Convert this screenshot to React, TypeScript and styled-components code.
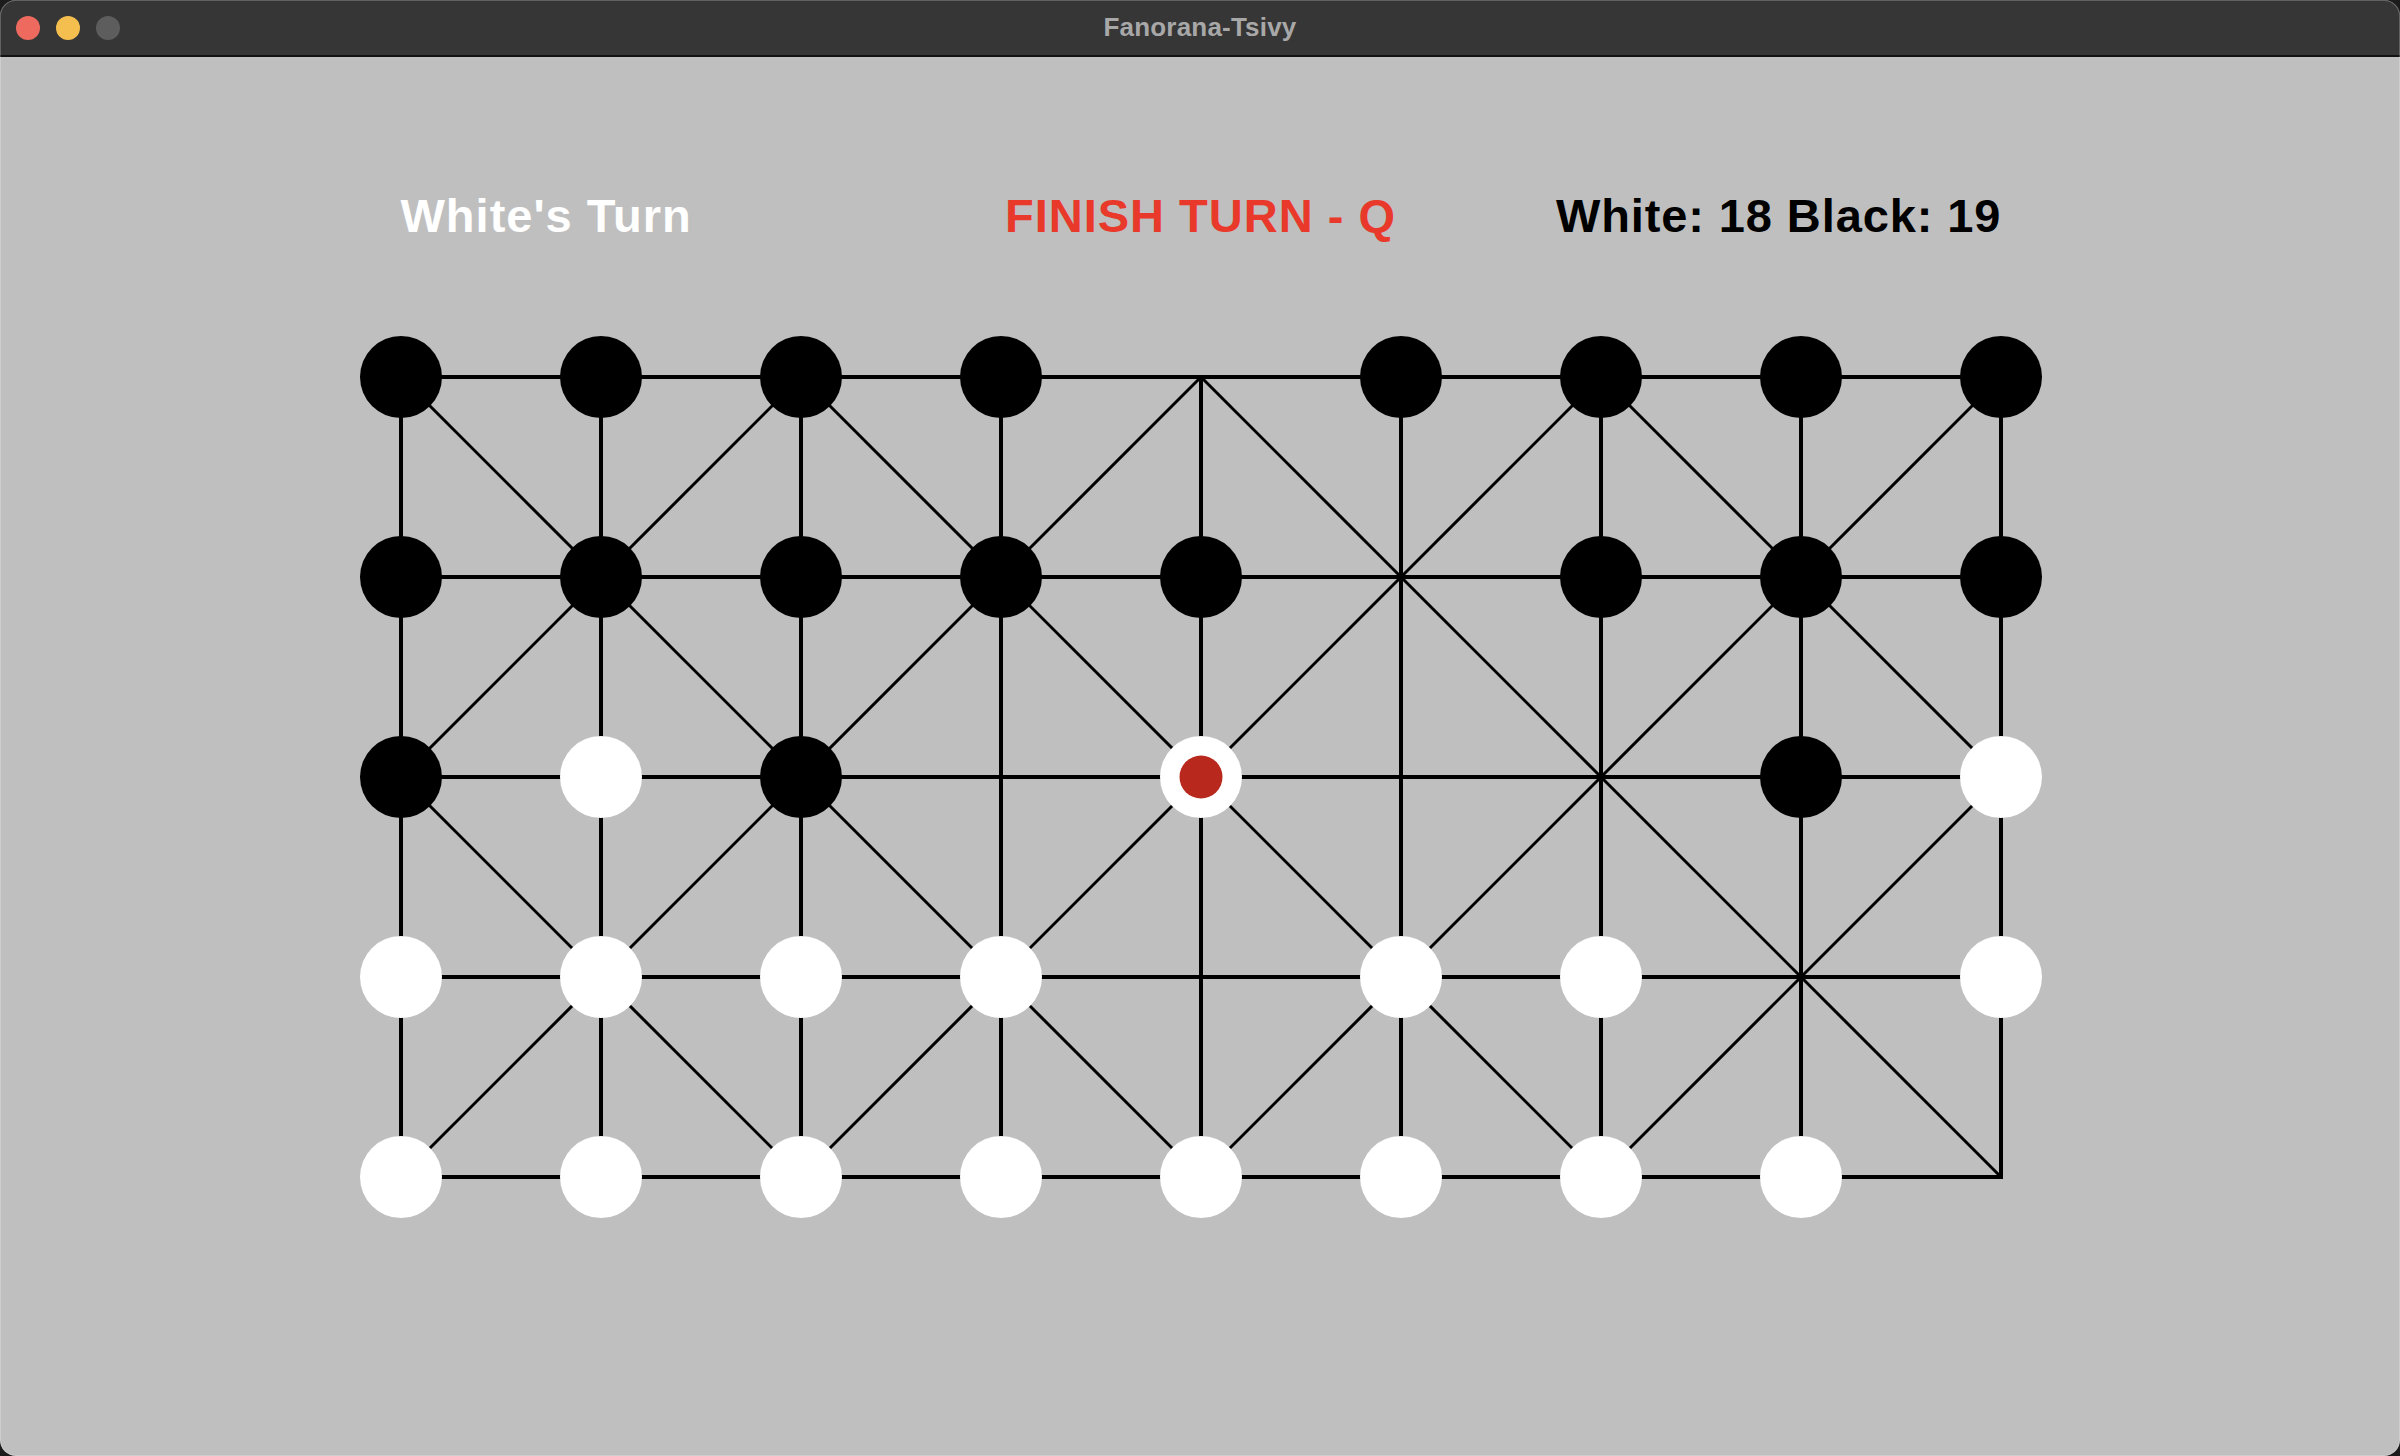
import React from "react";
import styled, { createGlobalStyle } from "styled-components";

type Cell = "B" | "W" | "S" | ".";

// S = the white piece that is selected (red dot)
const BOARD: string[] = [
  "BBBB.BBBB",
  "BBBBB.BBB",
  "BWB.S..BW",
  "WWWW.WW.W",
  "WWWWWWWW.",
];

const STEP = 200;
const PAD = 50;
const COLS = 9;
const ROWS = 5;
const PIECE_R = 41;

const GlobalStyle = createGlobalStyle`
  html, body {
    margin: 0;
    padding: 0;
    background: #1c1c1c;
  }

  body {
    font-family: "Liberation Sans", Arial, sans-serif;
  }
`;

const Window = styled.div`
  position: relative;
  width: 2400px;
  height: 1456px;
  border-radius: 16px;
  overflow: hidden;
  background: #bfbfbf;
  display: flex;
  flex-direction: column;

  &::after {
    content: "";
    position: absolute;
    inset: 0;
    border-radius: 16px;
    box-shadow: inset 0 0 0 1px rgba(255, 255, 255, 0.22);
    pointer-events: none;
  }
`;

const TitleBar = styled.div`
  height: 55px;
  flex: none;
  background: #363636;
  border-bottom: 2px solid #111;
  display: grid;
  grid-template-columns: 1fr auto 1fr;
  align-items: center;
`;

const Lights = styled.div`
  display: flex;
  gap: 16px;
  padding-left: 16px;
`;

const Light = styled.span<{ $color: string }>`
  width: 24px;
  height: 24px;
  border-radius: 50%;
  background: ${(p) => p.$color};
`;

const Title = styled.div`
  color: #a8a8a8;
  font-weight: 700;
  font-size: 26px;
  letter-spacing: 0.2px;
`;

const Content = styled.main`
  flex: 1;
  display: flex;
  flex-direction: column;
  align-items: center;
  padding-top: 135px;
`;

const Header = styled.div`
  width: 1600px;
  display: grid;
  grid-template-columns: 1fr 1fr 1fr;
  margin-left: 1px;
`;

const Label = styled.div<{ $color: string; $align: "left" | "center" | "right"; $spacing?: number }>`
  color: ${(p) => p.$color};
  font-size: 47px;
  line-height: 47px;
  font-weight: 700;
  white-space: nowrap;
  text-align: ${(p) => p.$align};
  letter-spacing: ${(p) => p.$spacing ?? 0}px;
  margin-right: ${(p) => (p.$align === "right" ? -(p.$spacing ?? 0) : 0)}px;
`;

const BoardSvg = styled.svg`
  display: block;
  margin-top: 88px;
  margin-left: 1px;
`;

const pos = (c: number, r: number) => [PAD + c * STEP, PAD + r * STEP];

const Board = () => {
  const ortho: React.ReactNode[] = [];
  const diag: React.ReactNode[] = [];

  for (let r = 0; r < ROWS; r++) {
    const [x1, y] = pos(0, r);
    const [x2] = pos(COLS - 1, r);
    ortho.push(<line key={`h${r}`} x1={x1} y1={y} x2={x2} y2={y} />);
  }
  for (let c = 0; c < COLS; c++) {
    const [x, y1] = pos(c, 0);
    const [, y2] = pos(c, ROWS - 1);
    ortho.push(<line key={`v${c}`} x1={x} y1={y1} x2={x} y2={y2} />);
  }
  // one diagonal per square, alternating like a fanorona board
  for (let r = 0; r < ROWS - 1; r++) {
    for (let c = 0; c < COLS - 1; c++) {
      const even = (r + c) % 2 === 0;
      const [ax, ay] = even ? pos(c, r) : pos(c + 1, r);
      const [bx, by] = even ? pos(c + 1, r + 1) : pos(c, r + 1);
      diag.push(<line key={`d${r}-${c}`} x1={ax} y1={ay} x2={bx} y2={by} />);
    }
  }

  const pieces: React.ReactNode[] = [];
  BOARD.forEach((row, r) =>
    row.split("").forEach((ch, c) => {
      const cell = ch as Cell;
      if (cell === ".") return;
      const [x, y] = pos(c, r);
      pieces.push(
        <circle key={`p${r}-${c}`} cx={x} cy={y} r={PIECE_R} fill={cell === "B" ? "#000" : "#fff"} />
      );
      if (cell === "S") {
        pieces.push(<circle key={`s${r}-${c}`} cx={x} cy={y} r={21.5} fill="#b8281c" />);
      }
    })
  );

  const w = PAD * 2 + STEP * (COLS - 1);
  const h = PAD * 2 + STEP * (ROWS - 1);

  return (
    <BoardSvg width={w} height={h} viewBox={`0 0 ${w} ${h}`}>
      <g stroke="#000" strokeWidth={3} strokeLinecap="butt">
        {diag}
      </g>
      <g stroke="#000" strokeWidth={4} strokeLinecap="square">
        {ortho}
      </g>
      {pieces}
    </BoardSvg>
  );
};

const App = () => {
  return (
    <>
      <GlobalStyle />
      <Window>
        <TitleBar>
          <Lights>
            <Light $color="#ee6a5f" />
            <Light $color="#f5bf4f" />
            <Light $color="#5d5d5d" />
          </Lights>
          <Title>Fanorana-Tsivy</Title>
          <span />
        </TitleBar>

        <Content>
          <Header>
            <Label $color="#ffffff" $align="left" $spacing={1}>
              White's Turn
            </Label>
            <Label $color="#e8392b" $align="center" $spacing={1}>
              FINISH TURN - Q
            </Label>
            <Label $color="#000000" $align="right" $spacing={0.9}>
              White: 18 Black: 19
            </Label>
          </Header>

          <Board />
        </Content>
      </Window>
    </>
  );
};

export default App;
